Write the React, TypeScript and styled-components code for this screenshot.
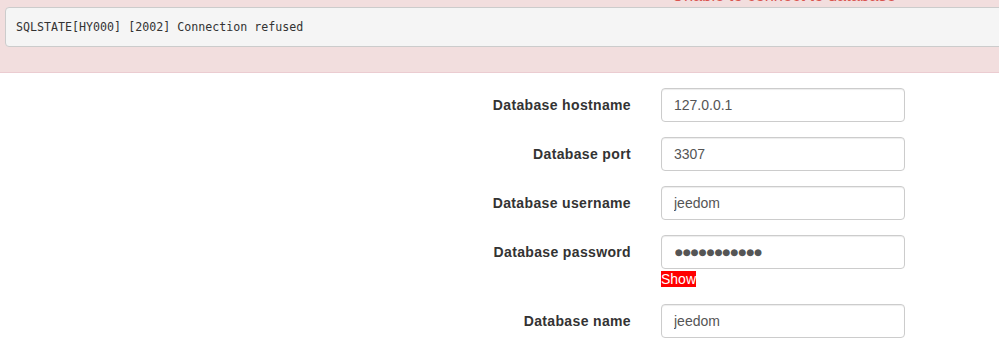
import React from 'react';
import styled, { createGlobalStyle } from 'styled-components';

const GlobalStyle = createGlobalStyle`
  html, body {
    margin: 0;
    padding: 0;
    background: #fff;
    overflow: hidden;
  }
  body {
    font-family: "Liberation Sans", Arial, sans-serif;
    font-size: 14px;
    color: #333;
  }
`;

const Page = styled.div`
  width: 999px;
  overflow: hidden;
`;

const Alert = styled.div`
  background-color: #f2dede;
  border-bottom: 1px solid #ebccd1;
  padding: 0 0 15px 5px;
`;

const AlertTitle = styled.div`
  margin: -15px 0 0 667px;
  height: 22px;
  line-height: 20px;
  font-size: 16.5px;
  color: #d9534f;
  white-space: nowrap;
`;

const ErrorBlock = styled.pre`
  margin: 0 -20px 10px 0;
  padding: 9.5px 10px;
  background-color: #f5f5f5;
  border: 1px solid #ccc;
  border-radius: 4px;
  font-family: "DejaVu Sans Mono", "Liberation Mono", monospace;
  font-size: 11.65px;
  line-height: 19px;
  color: #333;
`;

const Form = styled.form`
  margin-top: 15px;
`;

const FormGroup = styled.div`
  display: grid;
  grid-template-columns: 631px 244px;
  column-gap: 30px;
  margin-bottom: 15px;
`;

const Label = styled.label`
  text-align: right;
  padding-top: 7px;
  font-weight: bold;
  line-height: 20px;
  letter-spacing: 0.35px;
  color: #333;
`;

const Control = styled.div`
  display: flex;
  flex-direction: column;
`;

const Input = styled.input<{ $masked?: boolean }>`
  box-sizing: border-box;
  width: 244px;
  height: 34px;
  padding: 6px 12px 6px ${(p) => (p.$masked ? '13px' : '12px')};
  border: 1px solid #ccc;
  border-radius: 4px;
  box-shadow: inset 0 1px 1px rgba(0, 0, 0, 0.075);
  background: #fff;
  color: #555;
  font-family: ${(p) => (p.$masked ? '"DejaVu Sans", sans-serif' : '"Liberation Sans", Arial, sans-serif')};
  font-size: ${(p) => (p.$masked ? '9.1px' : '14px')};
  line-height: 20px;
  outline: none;
`;

const ShowRow = styled.div`
  line-height: 20px;
`;

const ShowToggle = styled.span`
  background-color: #f00;
  color: #fff;
  font-size: 14px;
  cursor: pointer;
`;

const fields = [
  { label: 'Database hostname', value: '127.0.0.1' },
  { label: 'Database port', value: '3307' },
  { label: 'Database username', value: 'jeedom' },
  { label: 'Database password', value: '●●●●●●●●●●●', masked: true },
  { label: 'Database name', value: 'jeedom' },
];

const App: React.FC = () => (
  <Page>
    <GlobalStyle />
    <Alert>
      <AlertTitle>Unable to connect to database</AlertTitle>
      <ErrorBlock>SQLSTATE[HY000] [2002] Connection refused</ErrorBlock>
    </Alert>
    <Form onSubmit={(e) => e.preventDefault()}>
      {fields.map((f) => (
        <FormGroup key={f.label}>
          <Label>{f.label}</Label>
          <Control>
            <Input readOnly value={f.value} $masked={f.masked} />
            {f.masked && (
              <ShowRow>
                <ShowToggle>Show</ShowToggle>
              </ShowRow>
            )}
          </Control>
        </FormGroup>
      ))}
    </Form>
  </Page>
);

export default App;
